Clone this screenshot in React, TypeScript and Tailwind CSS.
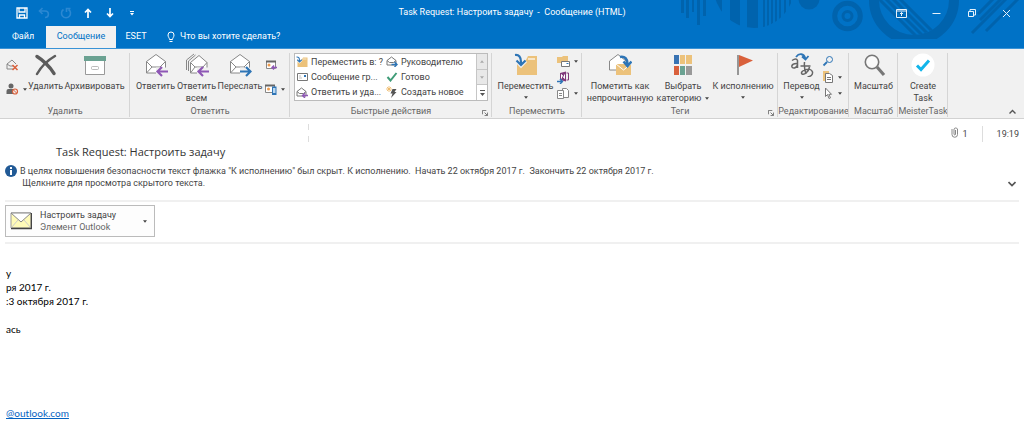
import type { ReactNode } from 'react';

const stripes = [763, 767, 771, 775, 779, 784, 789];

function Caret({ className = '' }: { className?: string }) {
  return (
    <svg viewBox="0 0 5 3" className={`h-[3px] w-1 shrink-0 ${className}`} fill="currentColor">
      <path d="M0 0h5L2.500 3z" />
    </svg>
  );
}

function Launcher() {
  return (
    <button aria-label="Параметры группы" className="absolute right-1 bottom-0.5 text-[#666]">
      <svg viewBox="0 0 7 7" className="size-[6px]" fill="none" stroke="currentColor">
        <path d="M.5 5V.5H5M3 3l3 3M6.500 3v3.500H3" />
      </svg>
    </button>
  );
}

function Group({ label, width, launcher, children }: { label: string; width: string; launcher?: boolean; children: ReactNode }) {
  return (
    <section aria-label={label} className={`relative flex shrink-0 flex-col ${width}`}>
      <div className="flex h-[52px] items-start justify-center">{children}</div>
      <div className="text-center text-[9px] leading-[13px] whitespace-nowrap text-[#666]">{label}</div>
      {launcher && <Launcher />}
      <span className="absolute top-0 right-0 h-16 w-px bg-[#d5d5d5]" />
    </section>
  );
}

function BigButton({ icon, lines, width, caret }: { icon: ReactNode; lines: string[]; width: string; caret?: 'inline' | 'below' }) {
  return (
    <button className={`flex shrink-0 flex-col items-center text-[9px] leading-3 whitespace-nowrap ${width}`}>
      <span className="mb-[3px] flex h-6 items-start justify-center">{icon}</span>
      {lines.map((line, i) => (
        <span key={line} className="flex items-center gap-1">
          {line}
          {caret === 'inline' && i === lines.length - 1 && <Caret />}
        </span>
      ))}
      {caret === 'below' && <Caret className="mt-1" />}
    </button>
  );
}

function SmallButton({ label, icon, caret }: { label: string; icon: ReactNode; caret?: boolean }) {
  return (
    <button aria-label={label} className="flex h-4 items-center gap-1">
      {icon}
      {caret && <Caret />}
    </button>
  );
}

function Envelope({ double }: { double?: boolean }) {
  return (
    <g fill="#fff" stroke="#888" strokeLinejoin="round">
      {double && <path d="M1.500 17V7L9 1" fill="none" />}
      {double && <path d="M3.500 18V8l7-6" fill="none" />}
      <path d={double ? 'M5.500 9.500 14 2.500l8 7V20h-16.500z' : 'M2.500 8.500 12 1.500l9.500 7V20h-19z'} />
      <path d={double ? 'M5.500 9.500 10 14h8l4-4.500M5.500 20l4.500-6M18 14l4 6' : 'M2.500 8.500 8 14h8l5.500-5.500M2.500 20 8 14M16 14l5.500 6'} fill="none" />
    </g>
  );
}

function ReplyIcon({ double, forward }: { double?: boolean; forward?: boolean }) {
  return (
    <svg viewBox="0 0 24 24" className="size-6">
      <Envelope double={double} />
      <path d="M12 14.500h12V24H12z" fill="#f1f1f1" />
      {forward ? (
        <path d="M12 18.500h10.500M18 14l4.500 4.500L18 23" fill="none" stroke="#2e75b6" strokeWidth="2.200" />
      ) : (
        <path d="M24 18.500H13.500M18 14l-4.500 4.500L18 23" fill="none" stroke="#8e57b5" strokeWidth="2.200" />
      )}
    </svg>
  );
}

function FolderMoveIcon({ className, halo }: { className: string; halo: string }) {
  return (
    <svg viewBox="0 0 24 24" className={`shrink-0 ${className}`}>
      <path d="M3 7h9l2-4h9v19H3z" fill="#ecc27b" />
      <path d="M14 6h7" stroke="#fff" strokeWidth="1.200" />
      <path d="M1 2c4-.5 6 2 6 7M2.500 7.500 7 12l4.500-4.500" fill="none" stroke={halo} strokeWidth="4.500" />
      <path d="M1 2c4-.5 6 2 6 7v2M2.500 7.500 7 12l4.500-4.500" fill="none" stroke="#2e75b6" strokeWidth="2.200" />
    </svg>
  );
}

function MiniReply({ forward }: { forward?: boolean }) {
  return (
    <svg viewBox="0 0 12 11" className="h-[11px] w-3 shrink-0" fill="none">
      <path d="M1 4.500 5.500 1 10 4.500V9H1zM1 4.500 3.500 6.500h4L10 4.500" fill="#fff" stroke="#777" />
      {forward ? (
        <path d="M5.500 8.500H11M8.500 6 11 8.500 8.500 11" stroke="#2e75b6" strokeWidth="1.400" />
      ) : (
        <path d="M12 8.500H6.500M9 6 6.500 8.500 9 11" stroke="#8e57b5" strokeWidth="1.400" />
      )}
    </svg>
  );
}

const quickSteps = [
  { label: 'Переместить в: ?', icon: <FolderMoveIcon className="size-3" halo="#fff" /> },
  { label: 'Руководителю', icon: <MiniReply forward /> },
  {
    label: 'Сообщение гр...',
    icon: (
      <svg viewBox="0 0 12 10" className="h-[10px] w-3 shrink-0">
        <path d="M1.500 1.500h10v7h-10z" fill="#fff" stroke="#777" />
        <path d="M3 6h3M3 4h2" stroke="#999" strokeWidth=".6" />
        <path d="M8 3h2v2H8z" fill="#2e75b6" />
      </svg>
    ),
  },
  {
    label: 'Готово',
    icon: (
      <svg viewBox="0 0 12 10" className="h-[10px] w-3 shrink-0">
        <path d="M1.500 5 4.500 8.500 10.500 1" fill="none" stroke="#3f9c78" strokeWidth="2" />
      </svg>
    ),
  },
  { label: 'Ответить и уда...', icon: <MiniReply /> },
  {
    label: 'Создать новое',
    icon: (
      <svg viewBox="0 0 12 12" className="size-3 shrink-0">
        <path d="M3 0v6M0 3h6M1 1l4 4M5 1 1 5" stroke="#ecb55f" strokeWidth=".8" />
        <path d="M6.500 3h4L8.500 6h2L5 12l1.500-4.500h-2z" fill="#555" />
      </svg>
    ),
  },
];

function TitleArt() {
  return (
    <svg viewBox="670 0 354 48" className="absolute top-0 right-0 h-12 w-[354px]" fill="#0063ad">
      <path d="M681 0h3v13h-3zM686 0h3v18h-3zM692 0h2v12h-2zM697 0h3v25h-3zM703 0h3v16h-3z" />
      <clipPath id="disc">
        <circle cx="754" cy="-12" r="40" />
      </clipPath>
      <g clipPath="url(#disc)">
        <path d="M714 0h8v14h-8zM730 0h10v30h-10zM747 0h11v30h-11z" />
        {stripes.map(x => (
          <rect key={x} x={x} y="0" width="2" height="30" />
        ))}
      </g>
      <circle cx="809" cy="-1" r="10.500" />
      <circle cx="847.500" cy="16" r="12.800" fill="none" stroke="#0063ad" strokeWidth="5" />
      <circle cx="847.500" cy="16" r="4.500" fill="none" stroke="#0063ad" strokeWidth="3" />
      <clipPath id="dome">
        <path d="M860 0h110v39H860z" />
      </clipPath>
      <clipPath id="domeInner">
        <circle cx="914" cy="0" r="35" />
      </clipPath>
      <g clipPath="url(#dome)" stroke="#0063ad" fill="none">
        <circle cx="914" cy="0" r="40" strokeWidth="10" />
        <path d="M870-10l50 50M877-10l50 50M884-10l50 50M891-10l50 50" strokeWidth="3" clipPath="url(#domeInner)" />
      </g>
      <path d="M972 33 1006-1M978 14 994-2M986 31l32-32M980 20l22-22" stroke="#0063ad" strokeWidth="3" fill="none" />
    </svg>
  );
}

function TitleBar() {
  return (
    <header className="relative flex h-[26px] items-center justify-between pr-3 pl-4 text-white">
      <div className="flex items-center gap-[10px]">
        <button aria-label="Сохранить">
          <svg viewBox="0 0 12 12" className="size-3" fill="none" stroke="currentColor" strokeWidth="1.300">
            <path d="M1 1h10v10H1zM3 1v4h6V1M3.500 11V8h5v3" />
          </svg>
        </button>
        <button aria-label="Отменить" className="text-[#2b88d2]">
          <svg viewBox="0 0 12 12" className="size-3" fill="none" stroke="currentColor" strokeWidth="1.600">
            <path d="M4.500 1 1.500 4l3 3M1.500 4H7c4.500 0 4.500 6.500 0 6.500" />
          </svg>
        </button>
        <button aria-label="Повторить" className="text-[#2b88d2]">
          <svg viewBox="0 0 12 12" className="size-3" fill="none" stroke="currentColor" strokeWidth="1.600">
            <path d="M3.500 2.500a4.500 4.500 0 1 0 5 0M6.500 5V1.500H10.500" />
          </svg>
        </button>
        <button aria-label="Предыдущий элемент">
          <svg viewBox="0 0 12 12" className="size-3" fill="none" stroke="currentColor" strokeWidth="1.700">
            <path d="M6 11V3M3 5.500l3-3 3 3" />
          </svg>
        </button>
        <button aria-label="Следующий элемент">
          <svg viewBox="0 0 12 12" className="size-3" fill="none" stroke="currentColor" strokeWidth="1.700">
            <path d="M6 1v8M3 6.500l3 3 3-3" />
          </svg>
        </button>
        <button aria-label="Настройка панели">
          <svg viewBox="0 0 12 12" className="size-3" fill="currentColor">
            <path d="M4 4h4v1H4zM4 6h4L6 8.500z" />
          </svg>
        </button>
      </div>
      <h1 className="absolute inset-x-0 text-center text-[9px] whitespace-pre">Task Request: Настроить задачу  -  Сообщение (HTML)</h1>
      <div className="relative flex items-center gap-6 text-[#e6f1fa]">
        <button aria-label="Параметры ленты">
          <svg viewBox="0 0 11 11" className="size-[11px]" fill="none" stroke="currentColor">
            <path d="M.5 1.500h10v8H.5zM.5 3h10M5.500 8V4.500M4 6l1.500-1.500L7 6" />
          </svg>
        </button>
        <button aria-label="Свернуть">
          <svg viewBox="0 0 11 11" className="size-[11px]" stroke="currentColor">
            <path d="M1.500 5.500h8" />
          </svg>
        </button>
        <button aria-label="Восстановить">
          <svg viewBox="0 0 11 11" className="size-[11px]" fill="none" stroke="currentColor">
            <path d="M2.500 3.500h5v5h-5zM4 3.500v-2h5.500V7H7.500" />
          </svg>
        </button>
        <button aria-label="Закрыть">
          <svg viewBox="0 0 11 11" className="size-[11px]" stroke="currentColor">
            <path d="m2 2 7 7M9 2 2 9" />
          </svg>
        </button>
      </div>
    </header>
  );
}

function Ribbon() {
  return (
    <div className="relative flex border-b border-[#d2d2d2] bg-[#f1f1f1] pt-1 text-[#444]">
      <Group label="Удалить" width="w-[130px]">
        <div className="flex flex-col gap-2 pt-1">
          <SmallButton
            label="Игнорировать"
            icon={
              <svg viewBox="0 0 13 12" className="h-3 w-[13px]" fill="none">
                <path d="M1 5 6 1l4 4M1 5v5h6M1 5l3 2h3" stroke="#888" />
                <path d="m6.500 6 5 5M11.500 6l-5 5" stroke="#d9603b" strokeWidth="1.500" />
              </svg>
            }
          />
          <SmallButton
            label="Нежелательная почта"
            caret
            icon={
              <svg viewBox="0 0 13 12" className="h-3 w-[13px]">
                <circle cx="5" cy="3" r="2.500" fill="#666" />
                <path d="M.5 11V8q0-2 2-2h5v5z" fill="#666" />
                <circle cx="9" cy="8.500" r="2.500" fill="#f1f1f1" stroke="#d9603b" strokeWidth="1.200" />
                <path d="m7.500 7 3 3" stroke="#d9603b" />
              </svg>
            }
          />
        </div>
        <BigButton
          lines={['Удалить']}
          width="w-[38px]"
          icon={
            <svg viewBox="0 0 24 24" className="size-6" fill="none" stroke="#5c5c5c" strokeLinecap="round">
              <path d="M3 3.500c5 3 13 10 17 17" strokeWidth="3.500" />
              <path d="M21 3C14 7 7 14 3 21" strokeWidth="2.500" />
            </svg>
          }
        />
        <BigButton
          lines={['Архивировать']}
          width="w-[60px]"
          icon={
            <svg viewBox="0 0 24 24" className="size-6">
              <path d="M2.500 7v14.500h19V7" fill="#fff" stroke="#999" />
              <path d="M1 3h22v5H1z" fill="#6ba292" />
              <rect x="8.500" y="13.500" width="7" height="3" rx="1" fill="#fff" stroke="#aaa" strokeWidth=".8" />
            </svg>
          }
        />
      </Group>

      <Group label="Ответить" width="w-[160px]">
        <BigButton lines={['Ответить']} width="w-[41px]" icon={<ReplyIcon />} />
        <BigButton lines={['Ответить', 'всем']} width="w-[41px]" icon={<ReplyIcon double />} />
        <BigButton lines={['Переслать']} width="w-[46px]" icon={<ReplyIcon forward />} />
        <div className="ml-0.5 flex flex-col gap-2 pt-1">
          <SmallButton
            label="Собрание"
            icon={
              <svg viewBox="0 0 12 12" className="size-3" fill="none">
                <path d="M1.500 2.500h9v7h-9z" fill="#fff" stroke="#888" />
                <path d="M1 2.500h10" stroke="#666" strokeWidth="2" />
                <circle cx="4" cy="6" r="1.500" fill="#ee9a4b" />
                <path d="M12 8.500H7M9 6.500l-2 2 2 2" stroke="#8e57b5" strokeWidth="1.400" />
              </svg>
            }
          />
          <SmallButton
            label="Другие действия"
            caret
            icon={
              <svg viewBox="0 0 12 12" className="size-3" fill="none">
                <path d="M.5 2.500h9v7h-9z" fill="#fff" stroke="#888" />
                <path d="M0 2.500h10" stroke="#666" strokeWidth="2" />
                <circle cx="3.500" cy="6" r="1.500" fill="#ee9a4b" />
                <path d="M7 3.500h4.500V12H7z" fill="#2e75b6" />
                <path d="M8 5h2.500v5H8z" fill="#bcd8f0" />
              </svg>
            }
          />
        </div>
      </Group>

      <Group label="Быстрые действия" width="w-[202px]" launcher>
        <div className="flex h-12 w-[194px] border border-[#bbb] bg-white">
          <div className="grid flex-1 grid-cols-[90px_1fr] grid-rows-3 pl-px">
            {quickSteps.map(step => (
              <button key={step.label} className="flex items-center gap-[3px] text-[9px] leading-3 whitespace-nowrap">
                {step.icon}
                {step.label}
              </button>
            ))}
          </div>
          <div className="flex w-[11px] flex-col border-l border-[#c6c6c6] bg-[#e8e8e8] text-[#aaa]">
            <button aria-label="Вверх" className="flex flex-1 items-center justify-center border-b border-[#c6c6c6]">
              <Caret className="rotate-180" />
            </button>
            <button aria-label="Вниз" className="flex flex-1 items-center justify-center border-b border-[#c6c6c6]">
              <Caret />
            </button>
            <button aria-label="Дополнительно" className="flex flex-1 items-center justify-center bg-white text-[#555]">
              <svg viewBox="0 0 5 6" className="h-[6px] w-[5px]" fill="currentColor">
                <path d="M0 0h5v1H0zM0 3h5L2.500 6z" />
              </svg>
            </button>
          </div>
        </div>
      </Group>

      <Group label="Переместить" width="w-[90px]">
        <BigButton lines={['Переместить']} width="w-[58px]" caret="below" icon={<FolderMoveIcon className="size-6" halo="#f1f1f1" />} />
        <div className="ml-0.5 flex flex-col">
          <SmallButton
            label="Правила"
            caret
            icon={
              <svg viewBox="0 0 13 13" className="size-[13px]">
                <path d="M0 2h5l1-1h5v7H0z" fill="#ecc27b" />
                <path d="M4.500 6.500h8v5h-8z" fill="#fff" stroke="#777" />
                <path d="M9.500 8h2v1h-2z" fill="#2e75b6" />
              </svg>
            }
          />
          <SmallButton
            label="OneNote"
            icon={
              <svg viewBox="0 0 13 13" className="size-[13px]" fill="none">
                <path d="M3 2l6-1.500v10L3 9z" fill="#80397b" />
                <path d="M9.500 2h2v7h-2" stroke="#80397b" />
                <path d="M4.500 7.500v-4l3 4v-4" stroke="#fff" />
                <path d="M0 10.500h5M3 8l2.500 2.500L3 13" stroke="#2e75b6" strokeWidth="1.400" />
              </svg>
            }
          />
          <SmallButton
            label="Действия"
            caret
            icon={
              <svg viewBox="0 0 13 13" className="size-[13px]" fill="#fff" stroke="#888">
                <path d="M5.500 1.500h4l2 2v7h-6z" />
                <path d="M.5 3.500h6v8h-6zM2 6.500h3M2 8.500h3" />
              </svg>
            }
          />
        </div>
      </Group>

      <Group label="Теги" width="w-[196px]" launcher>
        <BigButton
          lines={['Пометить как', 'непрочитанную']}
          width="w-[70px]"
          icon={
            <svg viewBox="0 0 24 24" className="size-6" fill="none">
              <path d="M1.500 8 10 1.500 18 8v9H1.500z" fill="#fff" stroke="#888" />
              <path d="M8 11h15v11H8z" fill="#ecc27b" />
              <path d="m8 11 7.500 6L23 11" stroke="#fff" />
              <path d="M12 4c5-1 7.500 2 7.500 7M15.500 8.500l4 4.500 4-4.500" stroke="#2e75b6" strokeWidth="2.500" />
            </svg>
          }
        />
        <BigButton
          lines={['Выбрать', 'категорию']}
          width="w-[56px]"
          caret="inline"
          icon={
            <svg viewBox="0 0 24 24" className="size-6">
              <path d="M3 2h5v9H3z" fill="#3873b3" />
              <path d="M9 2h5v9H9zM15 2h6v9h-6z" fill="#ecc27b" />
              <path d="M3 13h5v9H3z" fill="#d9603b" />
              <path d="M9 13h5v9H9z" fill="#6ba292" />
              <path d="M15 13h6v9h-6z" fill="#999" />
            </svg>
          }
        />
        <BigButton
          lines={['К исполнению']}
          width="w-[64px]"
          caret="below"
          icon={
            <svg viewBox="0 0 24 24" className="size-6">
              <path d="M7 2v20" stroke="#777" strokeWidth="1.500" />
              <path d="m8 2 14 5.500L8 14z" fill="#d9603b" />
            </svg>
          }
        />
      </Group>

      <Group label="Редактирование" width="w-[71px]">
        <BigButton
          lines={['Перевод']}
          width="w-10"
          caret="below"
          icon={
            <svg viewBox="0 0 24 24" className="size-6" fill="none" stroke="#666" strokeWidth="1.500">
              <path d="M2 7.500q4.500-3 5.500 0v7.500M7.500 10.500c-7-.5-7 5-3 4.500q3-1 3-4" />
              <path d="M10.500 13h10M14.500 9c-.5 5 0 8 1.500 12M19.500 14c-1 5-5 8-7.500 7-3-3 9-8 10.500-2 .5 3-2 4.500-5 5" />
              <path d="M6 4c3-4 8-4 9.500 2M12 3.500l3.500 3L18.500 3" stroke="#2e75b6" strokeWidth="1.800" />
            </svg>
          }
        />
        <div className="mr-1 flex flex-col">
          <SmallButton
            label="Найти"
            icon={
              <svg viewBox="0 0 12 12" className="size-3" fill="none" stroke="#2e75b6">
                <circle cx="7.500" cy="4.500" r="3" />
                <path d="M5 7 1.500 10.500" strokeWidth="1.800" />
              </svg>
            }
          />
          <SmallButton
            label="Связанные"
            caret
            icon={
              <svg viewBox="0 0 12 12" className="size-3">
                <path d="M1 0h6v10H1z" fill="#ecc27b" />
                <path d="M3.500 2.500h4l3 2v7h-7zM5 6.500h4M5 8.500h4" fill="#fff" stroke="#777" />
              </svg>
            }
          />
          <SmallButton
            label="Выделить"
            caret
            icon={
              <svg viewBox="0 0 12 12" className="size-3" fill="#fff" stroke="#777">
                <path d="M3.500 1v8.500l2-2 1.500 4 1.500-.7-1.700-3.500H9.500z" />
              </svg>
            }
          />
        </div>
      </Group>

      <Group label="Масштаб" width="w-[49px]">
        <BigButton
          lines={['Масштаб']}
          width="w-10"
          icon={
            <svg viewBox="0 0 24 24" className="size-6" fill="none" stroke="#777">
              <circle cx="10" cy="9" r="6.700" fill="#fafafa" strokeWidth="1.600" />
              <path d="m15 14 7 8" strokeWidth="3.200" />
            </svg>
          }
        />
      </Group>

      <Group label="MeisterTask" width="w-[50px]">
        <BigButton
          lines={['Create', 'Task']}
          width="w-10"
          icon={
            <svg viewBox="0 0 24 24" className="size-6">
              <circle cx="12" cy="12" r="11.500" fill="#fff" />
              <path d="m6 12.500 4 4 8-9" fill="none" stroke="#12b5ea" strokeWidth="3" />
            </svg>
          }
        />
      </Group>

      <button aria-label="Свернуть ленту" className="absolute right-2 bottom-1 text-[#555]">
        <svg viewBox="0 0 7 5" className="h-[5px] w-[7px]" fill="none" stroke="currentColor" strokeWidth="1.400">
          <path d="M.5 4.500 3.500 1.500l3 3" />
        </svg>
      </button>
    </div>
  );
}

export default function App() {
  return (
    <div className="bg-white font-[Roboto,'Noto_Sans',sans-serif] text-[#444]">
      <div className="relative border-b border-[#3a93d6] bg-[#0072c6]">
        <TitleArt />
        <TitleBar />
        <nav className="relative flex h-[22px] items-stretch text-[9px] whitespace-nowrap text-white">
          <button className="w-[46px]">Файл</button>
          <button className="w-[70px] bg-[#f1f1f1] text-[#0072c6]">Сообщение</button>
          <button className="w-10">ESET</button>
          <button className="ml-[10px] flex items-center gap-1">
            <svg viewBox="0 0 10 12" className="h-3 w-[10px]" fill="none" stroke="currentColor">
              <path d="M3.500 8.500C3.500 7 2 6 2 4a3 3 0 0 1 6 0c0 2-1.500 3-1.500 4.500zM3.500 10.500h3" />
            </svg>
            Что вы хотите сделать?
          </button>
        </nav>
      </div>

      <Ribbon />

      <main className="px-[5px]">
        <div className="flex h-[23px] items-end justify-end text-[9px] leading-4">
          <div className="mr-auto ml-[303px] flex h-[18px] flex-col justify-between">
            <span className="h-[6px] w-px bg-[#ddd]" />
            <span className="h-[6px] w-px bg-[#ddd]" />
          </div>
          <svg viewBox="0 0 8 12" className="mb-1 h-3 w-2" fill="none" stroke="#888">
            <path d="M1 3v5.500a2.500 2.500 0 0 0 5.500 0V3a2 2 0 0 0-3.500 0v5.500q1 1 1.500 0V4" />
          </svg>
          <span className="ml-1">1</span>
          <span className="mx-[14px] h-4 w-px bg-[#ddd]" />
          <time>19:19</time>
        </div>

        <h2 className="mt-0.5 ml-[51px] font-['Open_Sans',sans-serif] text-[11px] leading-4 text-[#333]">Task Request: Настроить задачу</h2>

        <div className="mt-[5px] flex items-start border-b-2 border-[#f0f0f0] pb-[11px]">
          <svg viewBox="0 0 12 12" className="size-3">
            <circle cx="6" cy="6" r="6" fill="#215a96" />
            <path d="M6 2v2M6 5v5" stroke="#fff" strokeWidth="2" />
          </svg>
          <p className="ml-[3px] text-[9px] leading-3 whitespace-pre">
            {'В целях повышения безопасности текст флажка "К исполнению" был скрыт. К исполнению.  Начать 22 октября 2017 г.  Закончить 22 октября 2017 г.\n Щелкните для просмотра скрытого текста.'}
          </p>
          <button aria-label="Развернуть" className="mt-4 mr-[3px] ml-auto">
            <svg viewBox="0 0 8 6" className="h-[6px] w-2" fill="none" stroke="#555" strokeWidth="1.700">
              <path d="m.5 1 3.500 3.500L7.500 1" />
            </svg>
          </button>
        </div>

        <div className="border-b-2 border-[#f0f0f0] pt-[3px] pb-[5px]">
          <button className="flex w-[150px] items-center border border-[#bbb] bg-[#fdfdfd] py-[3px] pr-[7px] pl-1 text-left text-[9px] leading-3">
            <svg viewBox="0 0 22 18" className="h-[18px] w-[22px]" fill="none">
              <path d="M1 1h20v15H1z" fill="#fffbb8" stroke="#999" />
              <path d="m1 1 10 9L21 1z" fill="#fff" stroke="#888" />
              <path d="m1 16 7-8M21 16l-7-8" stroke="#ccc" />
              <path d="M1 16.500h20.500V1" stroke="#444" strokeWidth="1.500" />
            </svg>
            <span className="ml-2 flex-1">
              <span className="block">Настроить задачу</span>
              <span className="block text-[#666]">Элемент Outlook</span>
            </span>
            <Caret />
          </button>
        </div>

        <div className="ml-px pt-[22px] font-[Lato,'Open_Sans',sans-serif] text-[10px] leading-[14px] text-black">
          <p>у</p>
          <p>ря 2017 г.</p>
          <p>:3 октября 2017 г.</p>
          <p className="mt-[14px]">ась</p>
          <p className="mt-[70px]">
            <a href="#mail" className="text-[#0563c1] underline">
              @outlook.com
            </a>
          </p>
        </div>
      </main>
    </div>
  );
}
